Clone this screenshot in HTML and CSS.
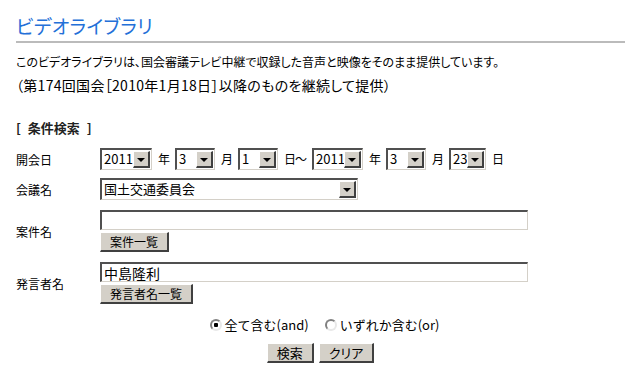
FILE: index.html
```html
<!DOCTYPE html>
<html lang="ja">
<head>
    <meta charset="UTF-8">
    <title>ビデオライブラリ</title>
    <link rel="stylesheet" href="styles.css">
</head>
<body>
    <h1 class="page-title">ビデオライブラリ</h1>
    <p class="lead">このビデオライブラリは、国会審議テレビ中継で収録した音声と映像をそのまま提供しています。</p>
    <p class="note">（第174回国会［2010年1月18日］以降のものを継続して提供）</p>

    <h3 class="cond-title">[ 条件検索 ]</h3>

    <form class="search-form" onsubmit="return false;">
        <div class="row row-date">
            <label class="label">開会日</label>
            <div class="date-line">
                <span class="dd w52"><span class="dd-value">2011</span><span class="dd-btn"><i></i></span></span>
                <span class="unit">年</span>
                <span class="dd w40"><span class="dd-value">3</span><span class="dd-btn"><i></i></span></span>
                <span class="unit">月</span>
                <span class="dd w40"><span class="dd-value">1</span><span class="dd-btn"><i></i></span></span>
                <span class="unit unit-range">日～</span>
                <span class="dd w51"><span class="dd-value">2011</span><span class="dd-btn"><i></i></span></span>
                <span class="unit">年</span>
                <span class="dd w40"><span class="dd-value">3</span><span class="dd-btn"><i></i></span></span>
                <span class="unit">月</span>
                <span class="dd w37"><span class="dd-value">23</span><span class="dd-btn"><i></i></span></span>
                <span class="unit">日</span>
            </div>
        </div>

        <div class="row row-meeting">
            <label class="label">会議名</label>
            <span class="dd w258"><span class="dd-value">国土交通委員会</span><span class="dd-btn"><i></i></span></span>
        </div>

        <div class="row row-case">
            <label class="label">案件名</label>
            <div class="field">
                <input type="text" class="text-input" value="">
                <div><button type="button" class="btn">案件一覧</button></div>
            </div>
        </div>

        <div class="row row-speaker">
            <label class="label">発言者名</label>
            <div class="field">
                <input type="text" class="text-input" value="中島隆利">
                <div><button type="button" class="btn">発言者名一覧</button></div>
            </div>
        </div>

        <div class="radios">
            <label class="radio-item"><input type="radio" name="mode" checked> 全て含む(and)</label>
            <label class="radio-item"><input type="radio" name="mode"> いずれか含む(or)</label>
        </div>

        <div class="actions">
            <button type="button" class="btn">検索</button>
            <button type="button" class="btn">クリア</button>
        </div>
    </form>
</body>
</html>
```

FILE: styles.css
```css
body {
    margin: 0;
    padding: 14px 16px 0 16px;
    background: #fff;
    color: #000;
    font-family: "Noto Sans CJK JP", "Noto Sans", sans-serif;
    font-size: 12px;
}
.page-title {
    margin: 0;
    font-size: 19px;
    line-height: 24px;
    font-weight: normal;
    letter-spacing: 0.3px;
    color: #2470d8;
    padding-bottom: 3px;
    border-bottom: 2px solid #bbb;
    font-feature-settings: "palt";
}
.lead {
    margin: 11px 0 0 0;
    line-height: 16px;
    font-feature-settings: "palt";
}
.note {
    margin: 5px 0 0 0;
    font-size: 14px;
    line-height: 20px;
    letter-spacing: 0.3px;
    font-feature-settings: "palt";
}
.cond-title {
    margin: 25px 0 0 0;
    font-size: 13px;
    line-height: 16px;
    font-weight: bold;
    word-spacing: 4px;
    color: #222;
}
.search-form {
    margin-top: 12px;
}
.row {
    display: flex;
    align-items: center;
}
.label {
    width: 84px;
    flex: none;
}
.row-meeting {
    margin-top: 8px;
}
.row-case {
    margin-top: 10px;
}
.row-speaker {
    margin-top: 10px;
}
.date-line {
    display: flex;
    align-items: center;
    gap: 6px;
}
.unit {
    width: 11px;
    line-height: 16px;
    white-space: nowrap;
}
.unit-range {
    width: 22px;
    letter-spacing: -1px;
}

/* classic dropdown */
.dd {
    display: inline-flex;
    align-items: stretch;
    height: 22px;
    box-sizing: border-box;
    border-style: solid;
    border-width: 2px 1px 1px 2px;
    border-color: #505050 #d4d0c8 #d4d0c8 #505050;
    background: #fff;
}
.w52 { width: 52px; }
.w51 { width: 51px; }
.w40 { width: 40px; }
.w37 { width: 37px; }
.w258 { width: 258px; }
.dd-value {
    flex: 1;
    padding-left: 2px;
    line-height: 18px;
    font-size: 13px;
    overflow: hidden;
    white-space: nowrap;
}
.dd-btn {
    width: 17px;
    margin: 1px 1px 1px 0;
    box-sizing: border-box;
    background: #d4d0c8;
    border-style: solid;
    border-width: 1px 2px 2px 1px;
    border-color: #fff #404040 #404040 #fff;
    display: flex;
    align-items: center;
    justify-content: center;
}
.dd-btn i {
    width: 0;
    height: 0;
    border-left: 4px solid transparent;
    border-right: 4px solid transparent;
    border-top: 4px solid #000;
    margin-top: 1px;
}

.field {
    display: flex;
    flex-direction: column;
    gap: 2px;
}
.text-input {
    width: 428px;
    height: 20px;
    box-sizing: border-box;
    margin: 0;
    padding: 0 2px;
    border-style: solid;
    border-width: 2px 1px 1px 2px;
    border-color: #505050 #d4d0c8 #d4d0c8 #505050;
    font-family: inherit;
    font-size: 14px;
    outline: none;
}
.btn {
    height: 20px;
    margin: 0;
    padding: 0 9px;
    background: #d4d0c8;
    color: #000;
    font-family: inherit;
    font-size: 12px;
    line-height: 16px;
    border-style: solid;
    border-width: 1px 2px 2px 1px;
    border-color: #fff #404040 #404040 #fff;
    border-radius: 0;
}
.actions .btn {
    font-size: 13px;
    font-feature-settings: "palt";
}

.radios {
    margin-top: 13px;
    display: flex;
    justify-content: center;
    gap: 16px;
    padding-left: 8px;
    font-size: 13px;
    line-height: 16px;
}
.radio-item {
    display: inline-flex;
    align-items: center;
    gap: 3px;
}
.radio-item input {
    appearance: none;
    width: 12px;
    height: 12px;
    margin: 0;
    box-sizing: border-box;
    border-radius: 50%;
    border: 2px solid;
    border-color: #808080 #e8e8e8 #e8e8e8 #808080;
    background: #fff;
}
.radio-item input:checked {
    background: radial-gradient(circle, #000 0 2px, #fff 2.5px);
}

.actions {
    margin-top: 10px;
    display: flex;
    justify-content: center;
    gap: 5px;
}
```
